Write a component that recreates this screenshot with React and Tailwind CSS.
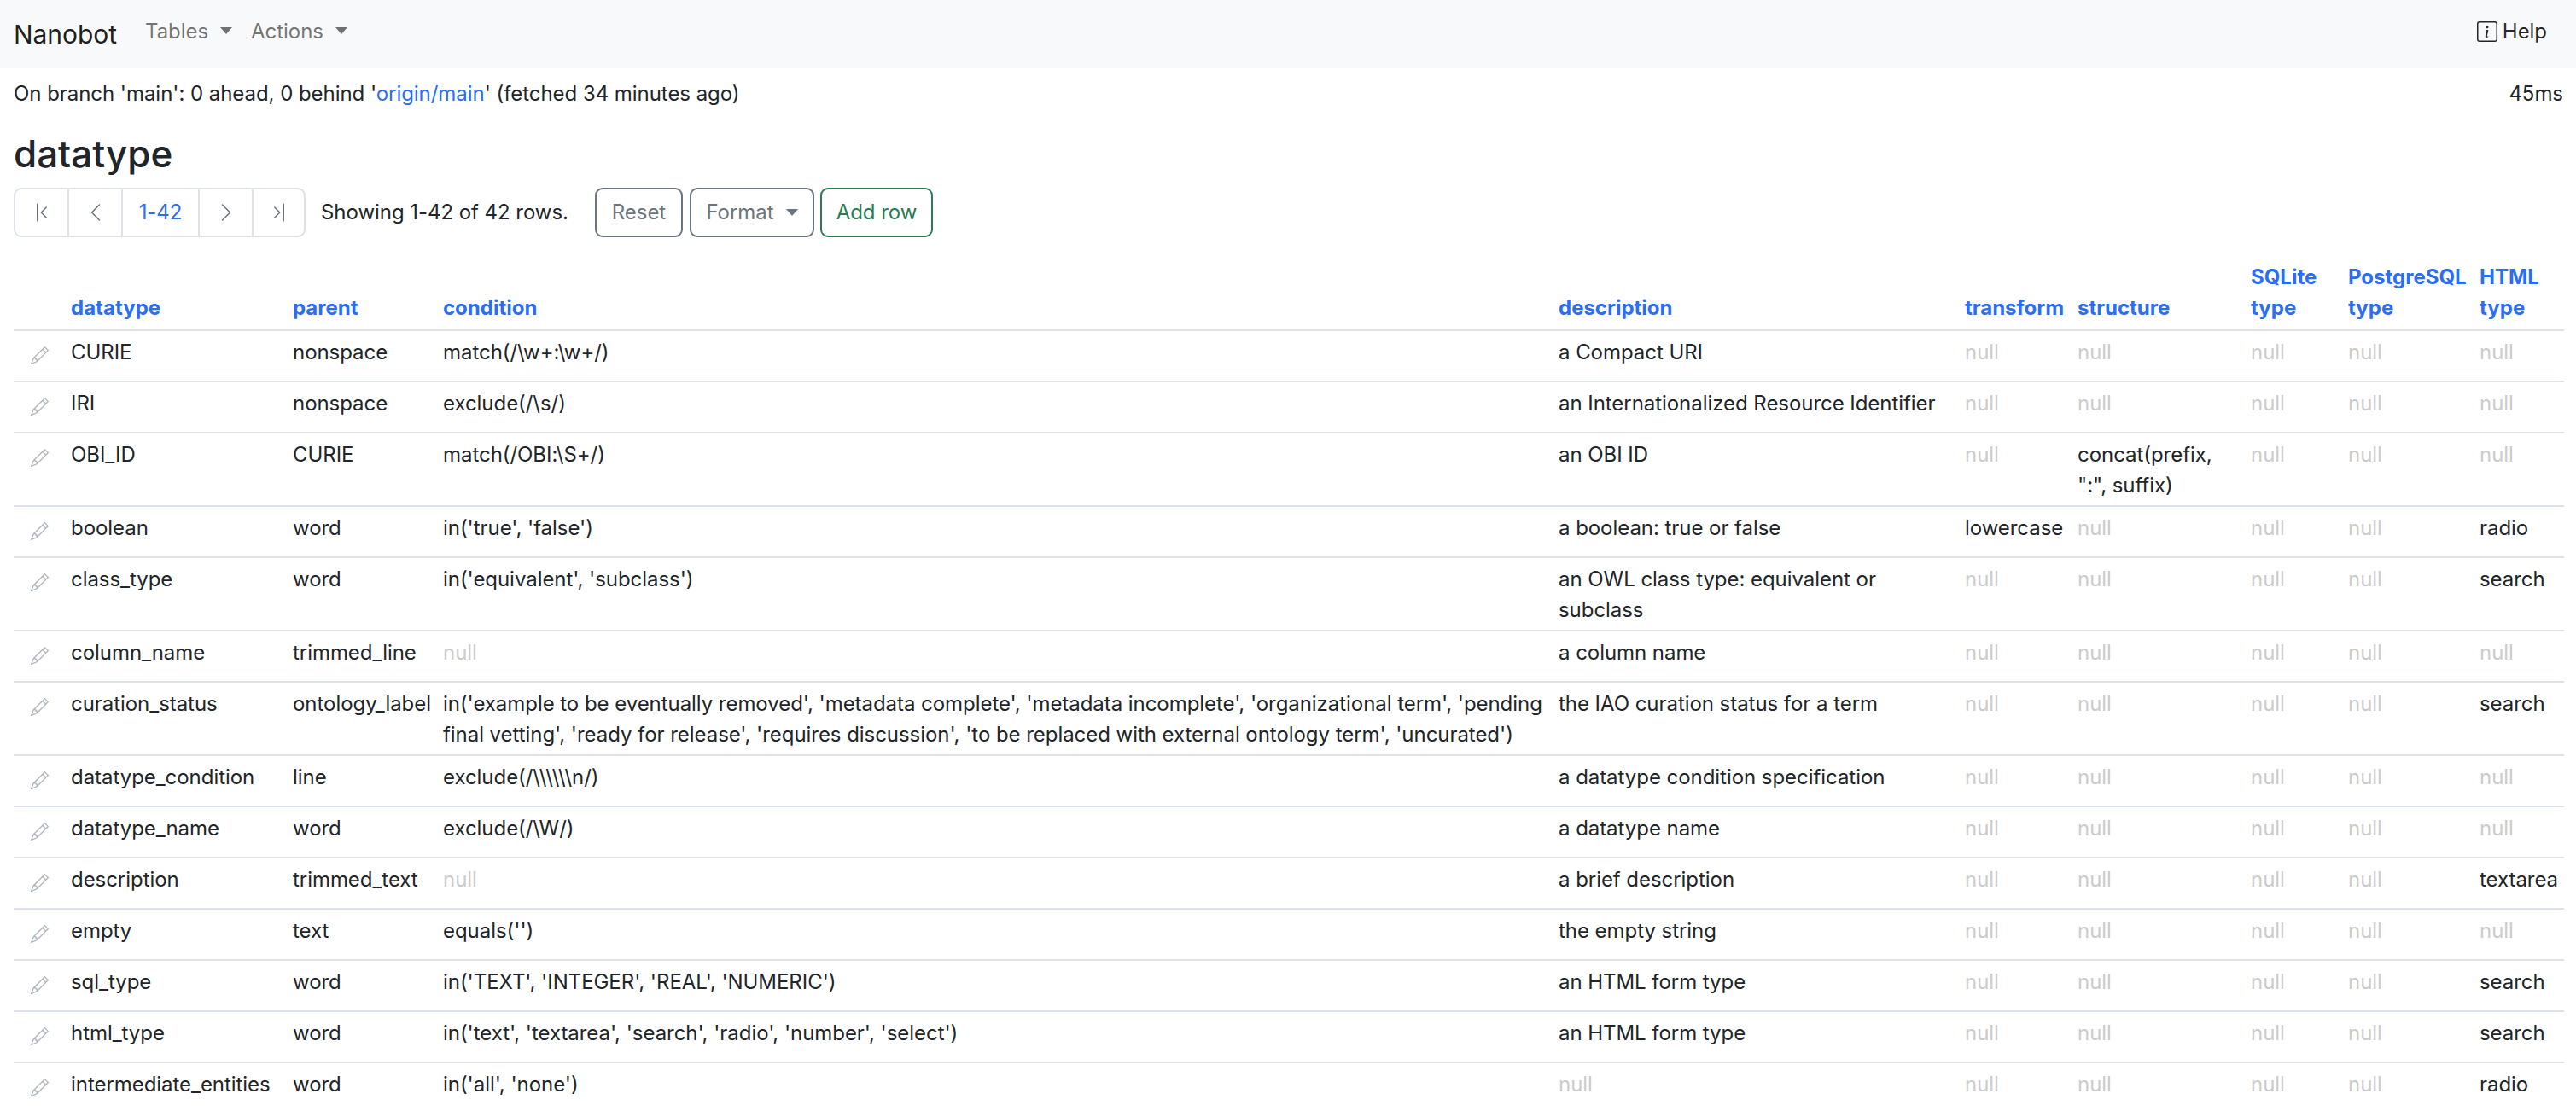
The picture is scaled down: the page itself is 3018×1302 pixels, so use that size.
import React from "react";
import { BsPencil, BsInfoSquare, BsChevronBarLeft, BsChevronLeft, BsChevronRight, BsChevronBarRight } from "react-icons/bs";

const rows = [
  ["CURIE", "nonspace", "match(/\\w+:\\w+/)", "a Compact URI", null, null, null, null, null],
  ["IRI", "nonspace", "exclude(/\\s/)", "an Internationalized Resource Identifier", null, null, null, null, null],
  ["OBI_ID", "CURIE", "match(/OBI:\\S+/)", "an OBI ID", null, 'concat(prefix, ":", suffix)', null, null, null],
  ["boolean", "word", "in('true', 'false')", "a boolean: true or false", "lowercase", null, null, null, "radio"],
  ["class_type", "word", "in('equivalent', 'subclass')", "an OWL class type: equivalent or subclass", null, null, null, null, "search"],
  ["column_name", "trimmed_line", null, "a column name", null, null, null, null, null],
  ["curation_status", "ontology_label", "in('example to be eventually removed', 'metadata complete', 'metadata incomplete', 'organizational term', 'pending final vetting', 'ready for release', 'requires discussion', 'to be replaced with external ontology term', 'uncurated')", "the IAO curation status for a term", null, null, null, null, "search"],
  ["datatype_condition", "line", "exclude(/\\\\\\\\\\\\n/)", "a datatype condition specification", null, null, null, null, null],
  ["datatype_name", "word", "exclude(/\\W/)", "a datatype name", null, null, null, null, null],
  ["description", "trimmed_text", null, "a brief description", null, null, null, null, "textarea"],
  ["empty", "text", "equals('')", "the empty string", null, null, null, null, null],
  ["sql_type", "word", "in('TEXT', 'INTEGER', 'REAL', 'NUMERIC')", "an HTML form type", null, null, null, null, "search"],
  ["html_type", "word", "in('text', 'textarea', 'search', 'radio', 'number', 'select')", "an HTML form type", null, null, null, null, "search"],
  ["intermediate_entities", "word", "in('all', 'none')", null, null, null, null, null, "radio"],
];

const headers = [["datatype"], ["parent"], ["condition"], ["description"], ["transform"], ["structure"], ["SQLite", "type"], ["PostgreSQL", "type"], ["HTML", "type"]];
const widths = [260, 176, 1307, 476, 132, 203, 114, 154, 107];

function Caret() {
  return <span className="ml-[14px] inline-block align-[5px] border-x-[7px] border-t-[8px] border-x-transparent border-t-current" />;
}

export default function App() {
  return (
    <div className="h-screen overflow-hidden bg-white text-[24px] leading-[36px] tracking-[-0.05px] text-[#212529] font-['Inter',sans-serif]">
      <nav className="flex h-[80px] items-start justify-between bg-[#f8f9fa] pl-[16px] pr-[34px]">
        <div className="flex items-start">
          <span className="mt-[18px] text-[30px] leading-[45px] text-[#000000e6]">Nanobot</span>
          <span className="ml-[33px] mt-[19px] text-[#0000008c]">Tables<Caret /></span>
          <span className="ml-[22px] mt-[19px] text-[#0000008c]">Actions<Caret /></span>
        </div>
        <div className="mt-[19px] flex items-center gap-[6px] text-[#000000d9]">
          <BsInfoSquare className="h-[24px] w-[24px]" />
          <span>Help</span>
        </div>
      </nav>

      <div className="flex justify-between pl-[16px] pr-[15px] pt-[12px]">
        <div>On branch 'main': 0 ahead, 0 behind '<span className="text-[#2a6ef2]">origin/main</span>' (fetched 34 minutes ago)</div>
        <div>45ms</div>
      </div>

      <h2 className="ml-[16px] mt-[23px] text-[44px] font-medium leading-[58px]">datatype</h2>

      <div className="ml-[16px] mt-[11px] flex items-center">
        <div className="flex h-[58px] items-stretch rounded-[9px] border-2 border-[#dee2e6] text-[#6c757d]">
          <span className="flex w-[61px] items-center justify-center"><BsChevronBarLeft className="h-[24px] w-[24px]" /></span>
          <span className="flex w-[63px] items-center justify-center border-l-2 border-[#dee2e6]"><BsChevronLeft className="h-[24px] w-[24px]" /></span>
          <span className="flex w-[90px] items-center justify-center border-l-2 border-[#dee2e6] text-[#2a6ef2]">1-42</span>
          <span className="flex w-[63px] items-center justify-center border-l-2 border-[#dee2e6]"><BsChevronRight className="h-[24px] w-[24px]" /></span>
          <span className="flex w-[61px] items-center justify-center border-l-2 border-[#dee2e6]"><BsChevronBarRight className="h-[24px] w-[24px]" /></span>
        </div>
        <span className="ml-[18px] w-[321px]">Showing 1-42 of 42 rows.</span>
        <span className="flex h-[58px] w-[103px] items-center justify-center rounded-[9px] border-2 border-[#6c757d] text-[#6c757d]">Reset</span>
        <span className="ml-[8px] flex h-[58px] w-[146px] items-center justify-center rounded-[9px] border-2 border-[#6c757d] text-[#6c757d]">Format<Caret /></span>
        <span className="ml-[7px] flex h-[58px] w-[132px] items-center justify-center rounded-[9px] border-2 border-[#2a7d53] text-[#2a7d53]">Add row</span>
      </div>

      <table className="ml-[16px] mt-[22px] w-[2988px] table-fixed border-collapse">
        <colgroup>
          <col className="w-[59px]" />
          {widths.map((w, i) => <col key={i} style={{ width: w }} />)}
        </colgroup>
        <thead>
          <tr className="border-b-2 border-[#dee2e6]">
            <th className="p-0" />
            {headers.map((h, i) => (
              <th key={i} className="px-[8px] pb-[7px] pt-[7px] text-left align-bottom font-bold tracking-[0px] text-[#2a6ef2]">
                {h.map((t, j) => <div key={j}>{t}</div>)}
              </th>
            ))}
          </tr>
        </thead>
        <tbody>
          {rows.map((r, i) => (
            <tr key={i} className="border-b-2 border-[#dee2e6]">
              <td className="h-[60px] p-0 pl-[20px] pt-[18px] align-top text-[#adb5bd]">
                <BsPencil className="h-[21px] w-[21px]" />
              </td>
              {r.map((c, j) => (
                <td key={j} className={`px-[8px] pb-[5px] pt-[7px] align-top ${c === null ? "text-[#cccccc]" : ""}`}>
                  {c === null ? "null" : c}
                </td>
              ))}
            </tr>
          ))}
        </tbody>
      </table>
    </div>
  );
}
